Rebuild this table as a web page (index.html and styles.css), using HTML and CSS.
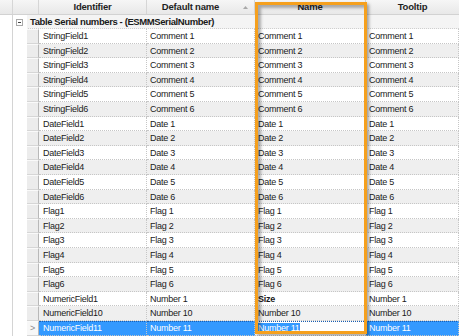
FILE: index.html
```html
<!DOCTYPE html>
<html>
<head>
<meta charset="utf-8">
<link rel="stylesheet" href="styles.css">
</head>
<body>
<div class="grid">
  <div class="hdr">
    <div class="hc"></div>
    <div class="hc"></div>
    <div class="hc">Identifier</div>
    <div class="hc sorted">Default name<svg class="arrow" width="5" height="3" viewBox="0 0 5 3"><path d="M0 3 L2.5 0 L5 3 Z" fill="#a8a8a8"/></svg></div>
    <div class="hc">Name</div>
    <div class="hc last">Tooltip</div>
  </div>
  <div class="group">
    <div class="tree"></div>
    <div class="tog"><span class="minus"></span></div>
    <div class="gtitle">Table Serial numbers - (ESMMSerialNumber)</div>
  </div>
  <div class="rows">
    <div class="row"><div class="t"></div><div class="t2"></div><div class="rh"></div><div class="c id">StringField1</div><div class="c">Comment 1</div><div class="c">Comment 1</div><div class="c">Comment 1</div></div>
    <div class="row alt"><div class="t"></div><div class="t2"></div><div class="rh"></div><div class="c id">StringField2</div><div class="c">Comment 2</div><div class="c">Comment 2</div><div class="c">Comment 2</div></div>
    <div class="row"><div class="t"></div><div class="t2"></div><div class="rh"></div><div class="c id">StringField3</div><div class="c">Comment 3</div><div class="c">Comment 3</div><div class="c">Comment 3</div></div>
    <div class="row alt"><div class="t"></div><div class="t2"></div><div class="rh"></div><div class="c id">StringField4</div><div class="c">Comment 4</div><div class="c">Comment 4</div><div class="c">Comment 4</div></div>
    <div class="row"><div class="t"></div><div class="t2"></div><div class="rh"></div><div class="c id">StringField5</div><div class="c">Comment 5</div><div class="c">Comment 5</div><div class="c">Comment 5</div></div>
    <div class="row alt"><div class="t"></div><div class="t2"></div><div class="rh"></div><div class="c id">StringField6</div><div class="c">Comment 6</div><div class="c">Comment 6</div><div class="c">Comment 6</div></div>
    <div class="row"><div class="t"></div><div class="t2"></div><div class="rh"></div><div class="c id">DateField1</div><div class="c">Date 1</div><div class="c">Date 1</div><div class="c">Date 1</div></div>
    <div class="row alt"><div class="t"></div><div class="t2"></div><div class="rh"></div><div class="c id">DateField2</div><div class="c">Date 2</div><div class="c">Date 2</div><div class="c">Date 2</div></div>
    <div class="row"><div class="t"></div><div class="t2"></div><div class="rh"></div><div class="c id">DateField3</div><div class="c">Date 3</div><div class="c">Date 3</div><div class="c">Date 3</div></div>
    <div class="row alt"><div class="t"></div><div class="t2"></div><div class="rh"></div><div class="c id">DateField4</div><div class="c">Date 4</div><div class="c">Date 4</div><div class="c">Date 4</div></div>
    <div class="row"><div class="t"></div><div class="t2"></div><div class="rh"></div><div class="c id">DateField5</div><div class="c">Date 5</div><div class="c">Date 5</div><div class="c">Date 5</div></div>
    <div class="row alt"><div class="t"></div><div class="t2"></div><div class="rh"></div><div class="c id">DateField6</div><div class="c">Date 6</div><div class="c">Date 6</div><div class="c">Date 6</div></div>
    <div class="row"><div class="t"></div><div class="t2"></div><div class="rh"></div><div class="c id">Flag1</div><div class="c">Flag 1</div><div class="c">Flag 1</div><div class="c">Flag 1</div></div>
    <div class="row alt"><div class="t"></div><div class="t2"></div><div class="rh"></div><div class="c id">Flag2</div><div class="c">Flag 2</div><div class="c">Flag 2</div><div class="c">Flag 2</div></div>
    <div class="row"><div class="t"></div><div class="t2"></div><div class="rh"></div><div class="c id">Flag3</div><div class="c">Flag 3</div><div class="c">Flag 3</div><div class="c">Flag 3</div></div>
    <div class="row alt"><div class="t"></div><div class="t2"></div><div class="rh"></div><div class="c id">Flag4</div><div class="c">Flag 4</div><div class="c">Flag 4</div><div class="c">Flag 4</div></div>
    <div class="row"><div class="t"></div><div class="t2"></div><div class="rh"></div><div class="c id">Flag5</div><div class="c">Flag 5</div><div class="c">Flag 5</div><div class="c">Flag 5</div></div>
    <div class="row alt"><div class="t"></div><div class="t2"></div><div class="rh"></div><div class="c id">Flag6</div><div class="c">Flag 6</div><div class="c">Flag 6</div><div class="c">Flag 6</div></div>
    <div class="row"><div class="t"></div><div class="t2"></div><div class="rh"></div><div class="c id">NumericField1</div><div class="c">Number 1</div><div class="c bold">Size</div><div class="c">Number 1</div></div>
    <div class="row alt"><div class="t"></div><div class="t2"></div><div class="rh"></div><div class="c id">NumericField10</div><div class="c">Number 10</div><div class="c">Number 10</div><div class="c">Number 10</div></div>
    <div class="row sel"><div class="t"></div><div class="t2"></div><div class="rh cur">&gt;</div><div class="c id">NumericField11</div><div class="c">Number 11</div><div class="c edit"><span class="seltext">Number 11</span></div><div class="c">Number 11</div></div>
  </div>
</div>
<div class="callout"></div>
</body>
</html>
```

FILE: styles.css
```css
* { box-sizing: border-box; }
html, body {
  margin: 0;
  padding: 0;
  width: 459px;
  height: 336px;
  overflow: hidden;
  background: #fff;
}
body {
  font-family: "Liberation Sans", Arial, sans-serif;
  font-size: 9px;
  letter-spacing: -0.25px;
  color: #1a1a1a;
  position: relative;
}
.grid {
  display: flex;
  flex-direction: column;
  width: 459px;
}
.hdr {
  display: grid;
  grid-template-columns: 13px 26px 108px 108px 111px 1fr;
  height: 15px;
  background: linear-gradient(#f6f6f6, #e8e8e8);
  border-bottom: 1px solid #d2d2d2;
}
.hc {
  border-right: 1px solid #d6d6d6;
  font-weight: bold;
  font-size: 9.5px;
  letter-spacing: -0.2px;
  line-height: 14px;
  text-align: center;
  color: #1e1e1e;
  position: relative;
}
.hc.last { border-right: none; }
.hc.sorted { padding-right: 20px; }
.arrow {
  position: absolute;
  right: 6px;
  top: 6px;
}
.group {
  display: grid;
  grid-template-columns: 13px 14px 1fr;
  height: 14px;
  background: #f4f4f4;
  border-bottom: 1px dotted #cfcfcf;
}
.tree { border-right: 1px solid #d4d4d4; background: #fff; }
.tog {
  display: flex;
  align-items: center;
  padding-left: 3px;
  background: #fff;
}
.minus {
  width: 7px;
  height: 7px;
  border: 1px solid #a9a9a9;
  background: #fff;
  position: relative;
}
.minus::after {
  content: "";
  position: absolute;
  left: 1px;
  top: 2px;
  width: 3px;
  height: 1px;
  background: #444;
}
.gtitle {
  font-weight: bold;
  font-size: 9.5px;
  letter-spacing: -0.4px;
  line-height: 14px;
  padding-left: 3px;
  white-space: nowrap;
}
.rows {
  display: grid;
  grid-auto-rows: 14.6px;
}
.row {
  display: grid;
  grid-template-columns: 13px 14px 12px 108px 108px 111px 1fr;
  background: #fff;
}
.row.alt { background: #efefef; }
.t { background: #fff; border-right: 1px solid #d4d4d4; }
.t2 { background: #fff; }
.rh {
  background: #ececec;
  border-top: 1px solid #fafafa;
  border-bottom: 1px solid #d6d6d6;
  border-right: 1px solid #b8b8b8;
}
.rh.cur {
  background: #f7f7f7;
  color: #8a8a8a;
  line-height: 13px;
  text-align: center;
}
.c {
  border-right: 1px dotted #c6c6c6;
  border-bottom: 1px dotted #c6c6c6;
  padding-left: 3px;
  line-height: 14px;
  white-space: nowrap;
  overflow: hidden;
}
.c.id { padding-left: 4px; }
.c.bold { font-weight: bold; }
.row.sel .c {
  background: #3399ff;
  color: #fff;
  border-top: 1px dotted #1a5fb4;
  line-height: 12px;
}
.row.sel .c.edit {
  background: #fff;
  padding-left: 3px;
}
.seltext {
  background: #3399ff;
  color: #fff;
}
.callout {
  position: absolute;
  left: 255px;
  top: 2px;
  width: 112px;
  height: 332px;
  border: 3px solid #f5a01e;
  box-shadow: 2px 2px 3px rgba(0,0,0,0.35), inset 3px 3px 3px rgba(0,0,0,0.3);
  pointer-events: none;
}
```
